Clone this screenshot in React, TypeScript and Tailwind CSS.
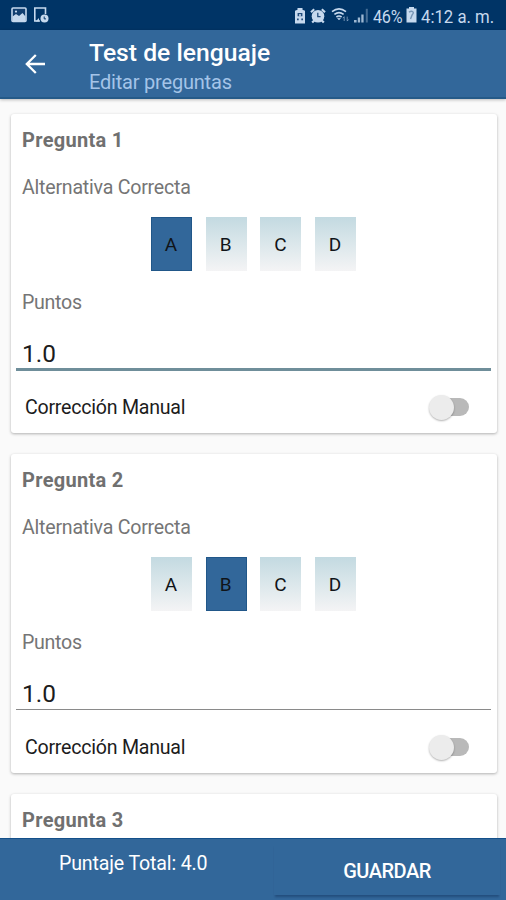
import React, { useState } from 'react';

const OPTIONS = ['A', 'B', 'C', 'D'];

function StatusBar() {
  return (
    <div className="flex h-[30px] shrink-0 items-center bg-[#003466] pl-[11px] pr-3 text-[#c6d9ee]">
      <svg width="16" height="16" viewBox="0 0 16 16" fill="none">
        <rect x="1" y="1" width="14" height="13.5" rx="1" fill="#123f70" stroke="currentColor" strokeWidth="1.6" />
        <path d="M1.5 9.5 5 7l3 2 3.5-3 3 3.5V14h-13z" fill="currentColor" />
        <circle cx="5" cy="4.6" r="1.1" fill="currentColor" />
      </svg>
      <svg className="ml-[6px]" width="16" height="16" viewBox="0 0 16 16" fill="none">
        <path d="M12.5 7V1H1.8v13H7" stroke="currentColor" strokeWidth="1.6" />
        <path d="M2.5 14.5 6 11v3.5z" fill="currentColor" />
        <circle cx="11.5" cy="11.5" r="4" fill="currentColor" />
        <path d="M11.2 9.5v2.4h1.8" stroke="#003466" strokeWidth="1" />
      </svg>
      <div className="grow" />
      <svg className="mt-px" width="12" height="16" viewBox="0 0 12 16" fill="currentColor">
        <path d="M3.5 0h5v1.8l2.5 1V15.5H1V2.8l2.5-1z" />
        <path d="M3.6 5h4.8v3.2H3.6zM3 10.6h1.7v1.6H3zM7.3 10.6H9v1.6H7.3z" fill="#234e7d" />
        <path d="M5.2 6h1.6v2.4H5.2z" />
      </svg>
      <svg className="ml-[4px] mt-px" width="16" height="16" viewBox="0 0 16 16" fill="none">
        <circle cx="8" cy="8.2" r="6.3" fill="currentColor" />
        <path d="M1 4.2 4.2 1.2M15 4.2 11.8 1.2M2.2 14.6l2.3-2.4M13.8 14.6l-2.3-2.4" stroke="currentColor" strokeWidth="2.2" />
        <path d="M7.8 4.8v3.8h2.8" stroke="#234e7d" strokeWidth="1.3" />
      </svg>
      <svg className="ml-[5px]" width="19" height="16" viewBox="0 0 19 16" fill="none" stroke="currentColor">
        <path d="M1 4.6Q8 -.8 15 4.6M3.4 7.4Q8 3.8 12.6 7.4M5.4 10Q8 8 10.6 10" strokeWidth="1.6" />
        <path d="M6.5 11.2h3L8 13z" fill="currentColor" strokeWidth=".5" />
        <path d="M13.2 14V9.8m-1.4 1.4 1.4-1.6M16.2 9.6v4.2m1.4-1.3-1.4 1.6" strokeWidth="1" opacity=".55" />
      </svg>
      <svg className="ml-[3px] mt-px" width="16" height="16" viewBox="0 0 16 16" fill="currentColor">
        <path d="M1 12h2.6v2.5H1zM4.8 9.6h2.3v4.9H4.8zM8.3 6.6h2.3v7.9H8.3z" opacity=".8" />
        <path d="M12.8.8h2v13.7h-2z" opacity=".35" />
      </svg>
      <span className="ml-[4px] w-[31px] origin-left scale-x-[0.9] whitespace-nowrap pt-[3px] text-[18px] leading-[27px] tracking-[-0.3px]">46%</span>
      <svg className="ml-[2px]" width="11" height="16" viewBox="0 0 11 16" fill="currentColor">
        <path d="M3 0h5v1.6h2.5v13.9H.5V1.6H3z" />
        <path d="M3 5.2c3-2 6 0 3.2 2.5L4.5 12" fill="none" stroke="#7795b5" strokeWidth="1.4" />
      </svg>
      <span className="ml-[4px] w-[73px] origin-left scale-x-[0.93] whitespace-nowrap pt-[3px] text-[18px] leading-[27px]">4:12 a. m.</span>
    </div>
  );
}

function Header() {
  return (
    <header className="z-10 flex h-[69px] shrink-0 items-center border-b-2 border-[#255a88] bg-[#32679a] shadow-[0_1px_3px_rgba(0,0,0,0.25)]">
      <svg className="ml-[25px]" width="21" height="20" viewBox="0 0 21 20" fill="none" stroke="#fff" strokeWidth="2.3">
        <path d="M20 10H2M10.8 1 1.8 10l9 9" />
      </svg>
      <div className="ml-[43px] whitespace-nowrap pt-[7px]">
        <h1 className="text-[24.7px] font-medium leading-[30px] text-white">Test de lenguaje</h1>
        <p className="text-[20px] leading-[29px] tracking-[-0.2px] text-[#a4c4e8]">Editar preguntas</p>
      </div>
    </header>
  );
}

function QuestionForm({ initial, focused }: { initial: string; focused: boolean }) {
  const [answer, setAnswer] = useState(initial);
  const [manual, setManual] = useState(false);
  return (
    <>
      <p className="mt-5 pl-[11px] text-[19.6px] leading-[27px] tracking-[-0.23px] text-[#757575]">Alternativa Correcta</p>
      <div className="mt-4 flex gap-[13.7px] pl-[140px]">
        {OPTIONS.map((o) => (
          <button
            key={o}
            onClick={() => setAnswer(o)}
            className={
              'h-[54px] w-[41px] pr-[1px] pt-[3px] text-[19px] text-[#101418] ' +
              (o === answer
                ? 'border border-[#215789] bg-[#32679a]'
                : 'bg-linear-to-b from-[#c3dae1] to-[#f4f4f5]')
            }
          >
            {o}
          </button>
        ))}
      </div>
      <p className="mt-[18px] pl-[11px] text-[19.6px] leading-[27px] tracking-[-0.3px] text-[#757575]">Puntos</p>
      <div className="ml-[5px] mr-[6px] mt-[21px] flex h-[34px] flex-col text-[24.4px] text-[#1c1c1c]">
        <span className="h-[31px] pl-[6px] leading-[34px]">1.0</span>
        <div className={focused ? 'h-[3px] bg-[#6f8e9a]' : 'mt-[1px] h-px bg-[#8a8a8a]'} />
      </div>
      <div className="mt-[10px] flex h-[52px] items-center justify-between pl-[14px] pr-[28px]">
        <span className="pt-[2px] text-[19.6px] tracking-[-0.24px] text-[#1c1c1c]">Corrección Manual</span>
        <button
          aria-pressed={manual}
          onClick={() => setManual(!manual)}
          className={'flex h-[18px] w-[38px] items-center rounded-full bg-[#b9b9b9] ' + (manual ? 'justify-end' : '')}
        >
          <span className="-ml-[2px] size-[25px] shrink-0 rounded-full bg-[#ececec] shadow-[0_1px_2px_rgba(0,0,0,0.3)]" />
        </button>
      </div>
    </>
  );
}

function QuestionCard({
  number,
  initial,
  focused = false,
}: {
  number: number;
  initial?: string;
  focused?: boolean;
}) {
  return (
    <section className="h-[319px] shrink-0 rounded-[3px] bg-white pt-3 shadow-[0_1px_3px_rgba(0,0,0,0.3)]">
      <h2 className="pl-[11px] text-[20px] font-bold leading-[28px] tracking-[0.3px] text-[#707070]">
        {`Pregunta ${number}`}
      </h2>
      {initial && <QuestionForm initial={initial} focused={focused} />}
    </section>
  );
}

export default function App() {
  return (
    <div className="flex h-[900px] w-[506px] flex-col overflow-hidden bg-[#fafafa] font-[Roboto,sans-serif]">
      <StatusBar />
      <Header />
      <main className="flex min-h-0 grow flex-col gap-[21px] overflow-hidden pl-[11px] pr-[9px] pt-[15px]">
        <QuestionCard number={1} initial="A" focused />
        <QuestionCard number={2} initial="B" />
        <QuestionCard number={3} />
      </main>
      <footer className="flex h-[62px] shrink-0 border-t border-[#14508a] bg-[#32679a] text-white">
        <div className="w-[274px] pl-[59px] pt-[11px] text-[19.6px] leading-[28px] tracking-[-0.15px]">Puntaje Total: 4.0</div>
        <button className="mr-[6px] mt-[4px] h-[52px] grow pt-[3px] text-[20px] font-medium tracking-[-0.5px] shadow-[0_3px_2px_-1px_rgba(0,20,60,0.3)]">
          GUARDAR
        </button>
      </footer>
    </div>
  );
}
